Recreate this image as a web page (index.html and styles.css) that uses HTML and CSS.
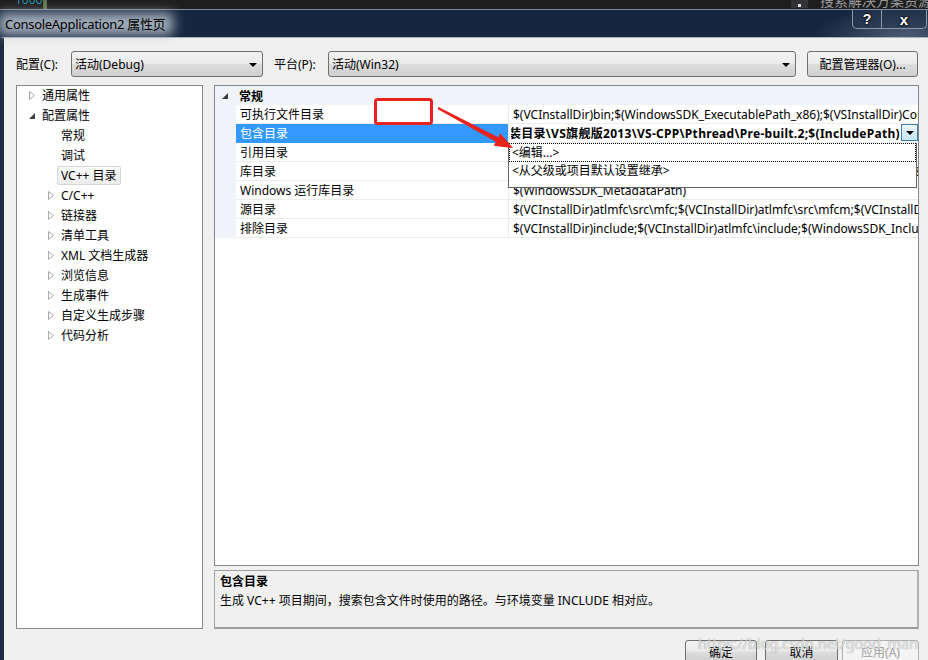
FILE: index.html
```html
<!DOCTYPE html>
<html>
<head>
<meta charset="utf-8">
<title>ConsoleApplication2 属性页</title>
<link rel="stylesheet" href="styles.css">
</head>
<body>
<div class="screen">
  <div class="topstrip">
    <span class="lnum">1006</span>
    <span class="gbar"></span>
    <span class="tbox"><span class="tdot"></span></span>
    <span class="srch">搜索解决方案资源管理器</span>
  </div>
  <div class="titlebar">
    <span class="title">ConsoleApplication2 属性页</span>
    <div class="capbtns">
      <span class="cap help">?</span>
      <span class="cap close">x</span>
    </div>
  </div>
  <div class="dialog">
    <div class="configrow">
      <span class="lbl lbl-cfg">配置(C):</span>
      <div class="combo combo-cfg"><span class="ctext">活动(Debug)</span><span class="carrow"></span></div>
      <span class="lbl lbl-plat">平台(P):</span>
      <div class="combo combo-plat"><span class="ctext">活动(Win32)</span><span class="carrow"></span></div>
      <span class="btn btn-mgr">配置管理器(O)...</span>
    </div>
    <div class="main">
      <div class="tree">
        <div class="titem l0"><svg class="exp" width="6" height="9" viewBox="0 0 6 9"><path d="M0.5 0.5 L5.5 4.5 L0.5 8.5 Z"/></svg><span>通用属性</span></div>
        <div class="titem l0"><svg class="col" width="6" height="9" viewBox="0 0 6 9"><path d="M6 2 L6 8 L0 8 Z"/></svg><span>配置属性</span></div>
        <div class="titem l1 leaf"><span>常规</span></div>
        <div class="titem l1 leaf"><span>调试</span></div>
        <div class="titem l1 leaf"><span class="tsel">VC++ 目录</span></div>
        <div class="titem l1"><svg class="exp" width="6" height="9" viewBox="0 0 6 9"><path d="M0.5 0.5 L5.5 4.5 L0.5 8.5 Z"/></svg><span>C/C++</span></div>
        <div class="titem l1"><svg class="exp" width="6" height="9" viewBox="0 0 6 9"><path d="M0.5 0.5 L5.5 4.5 L0.5 8.5 Z"/></svg><span>链接器</span></div>
        <div class="titem l1"><svg class="exp" width="6" height="9" viewBox="0 0 6 9"><path d="M0.5 0.5 L5.5 4.5 L0.5 8.5 Z"/></svg><span>清单工具</span></div>
        <div class="titem l1"><svg class="exp" width="6" height="9" viewBox="0 0 6 9"><path d="M0.5 0.5 L5.5 4.5 L0.5 8.5 Z"/></svg><span>XML 文档生成器</span></div>
        <div class="titem l1"><svg class="exp" width="6" height="9" viewBox="0 0 6 9"><path d="M0.5 0.5 L5.5 4.5 L0.5 8.5 Z"/></svg><span>浏览信息</span></div>
        <div class="titem l1"><svg class="exp" width="6" height="9" viewBox="0 0 6 9"><path d="M0.5 0.5 L5.5 4.5 L0.5 8.5 Z"/></svg><span>生成事件</span></div>
        <div class="titem l1"><svg class="exp" width="6" height="9" viewBox="0 0 6 9"><path d="M0.5 0.5 L5.5 4.5 L0.5 8.5 Z"/></svg><span>自定义生成步骤</span></div>
        <div class="titem l1"><svg class="exp" width="6" height="9" viewBox="0 0 6 9"><path d="M0.5 0.5 L5.5 4.5 L0.5 8.5 Z"/></svg><span>代码分析</span></div>
      </div>
      <div class="rightcol">
        <div class="grid">
          <div class="cat"><svg class="cattri" width="6" height="6" viewBox="0 0 6 6"><path d="M6 0 L6 6 L0 6 Z"/></svg><span class="catname">常规</span></div>
          <div class="prow"><div class="gut"></div><div class="pname">可执行文件目录</div><div class="pval">$(VCInstallDir)bin;$(WindowsSDK_ExecutablePath_x86);$(VSInstallDir)Common7\Tools\bin;$(VSInstallDir)Common7\tools;</div></div>
          <div class="prow sel"><div class="gut"></div><div class="pname">包含目录</div><div class="pval edit"><span class="eclip"><span class="etext">D:\安装目录\VS旗舰版2013\VS-CPP\Pthread\Pre-built.2;$(IncludePath)</span></span><span class="ddbtn"><span class="ddarrow"></span></span></div></div>
          <div class="prow"><div class="gut"></div><div class="pname">引用目录</div><div class="pval">$(VCInstallDir)atlmfc\lib;$(VCInstallDir)lib</div></div>
          <div class="prow"><div class="gut"></div><div class="pname">库目录</div><div class="pval">$(VCInstallDir)lib;$(VCInstallDir)atlmfc\lib;$(WindowsSDK_LibraryPath_x86);</div></div>
          <div class="prow"><div class="gut"></div><div class="pname">Windows 运行库目录</div><div class="pval">$(WindowsSDK_MetadataPath)</div></div>
          <div class="prow"><div class="gut"></div><div class="pname">源目录</div><div class="pval">$(VCInstallDir)atlmfc\src\mfc;$(VCInstallDir)atlmfc\src\mfcm;$(VCInstallDir)atlmfc\src\atl;$(VCInstallDir)crt\src;</div></div>
          <div class="prow"><div class="gut"></div><div class="pname">排除目录</div><div class="pval">$(VCInstallDir)include;$(VCInstallDir)atlmfc\include;$(WindowsSDK_IncludePath);$(MSBuildToolsPath32);</div></div>
          <div class="popup">
            <div class="pitem focus">&lt;编辑...&gt;</div>
            <div class="pitem">&lt;从父级或项目默认设置继承&gt;</div>
          </div>
        </div>
        <div class="desc">
          <div class="dtitle">包含目录</div>
          <div class="dtext">生成 VC++ 项目期间，搜索包含文件时使用的路径。与环境变量 INCLUDE 相对应。</div>
        </div>
      </div>
    </div>
    <div class="buttons">
      <span class="btn btn-ok">确定</span>
      <span class="btn btn-cancel">取消</span>
      <span class="btn btn-apply disabled">应用(A)</span>
    </div>
  </div>
  <svg class="annot" width="928" height="660" viewBox="0 0 928 660">
    <rect x="375.5" y="99.5" width="56" height="24" rx="2" ry="2" fill="#ffffff" stroke="#e8231c" stroke-width="3"/>
    <polygon points="437.5,108.9 438.5,107.1 498.2,137.3 500.3,133.3 513,148 493.7,145.7 495.8,141.7" fill="#e8231c"/>
  </svg>
  <div class="watermark">https://blog.csdn.net/good_man</div>
</div>
</body>
</html>
```

FILE: styles.css
```css
* { box-sizing: border-box; }
html, body { margin: 0; padding: 0; }
body {
  width: 928px;
  height: 660px;
  overflow: hidden;
  background: #1e1e1e;
  font-family: "Noto Sans", "Noto Sans CJK SC", sans-serif;
  font-size: 12px;
  color: #000;
}
.screen {
  position: relative;
  width: 928px;
  height: 660px;
  overflow: hidden;
}

/* top strip of the IDE behind */
.topstrip {
  height: 9px;
  display: flex;
  align-items: flex-start;
  background: #1e1e1e;
  overflow: hidden;
  white-space: nowrap;
}
.lnum {
  width: 28px;
  margin-left: 15px;
  margin-top: -7px;
  color: #2b91af;
  font-size: 12px;
  line-height: 14px;
}
.gbar {
  width: 4px;
  height: 9px;
  background: #60744a;
}
.tbox {
  margin-left: auto;
  width: 17px;
  height: 8px;
  background: #333337;
  display: flex;
  justify-content: center;
  align-items: flex-end;
  margin-right: 12px;
}
.tdot { width: 3px; height: 3px; background: #ddd; margin-bottom: 1px; }
.srch {
  color: #9a9a9a;
  font-size: 14px;
  line-height: 14px;
  margin-top: -6px;
  width: 108px;
  overflow: hidden;
}

/* title bar */
.titlebar {
  height: 28px;
  display: flex;
  align-items: center;
  background: #172640;
  background-image: radial-gradient(ellipse 90px 30px at 905px 26px, rgba(140,155,175,0.45), rgba(23,38,64,0) 100%);
  border-top: 1px solid #7d8ca2;
}
.title {
  position: relative;
  z-index: 0;
  margin-left: 5px;
  font-size: 13px;
  letter-spacing: -0.3px;
  line-height: 18px;
  color: #000;
}
.title::before {
  content: "";
  position: absolute;
  left: -6px;
  right: -8px;
  top: -2px;
  bottom: -2px;
  background: rgba(178, 188, 200, 0.9);
  filter: blur(6px);
  z-index: -1;
}
.capbtns {
  margin-left: auto;
  margin-right: 1px;
  align-self: flex-start;
  width: 75px;
  height: 19px;
  display: flex;
  border: 1px solid #8c98a8;
  border-top: none;
  border-radius: 0 0 5px 5px;
  background: rgba(40, 55, 80, 0.6);
}
.cap {
  display: flex;
  justify-content: center;
  align-items: center;
  color: #fff;
  font-weight: bold;
  font-family: "Liberation Sans", sans-serif;
  font-size: 14px;
  text-shadow: 0 0 2px #000, 0 0 3px #000;
}
.help { width: 29px; border-right: 1px solid #8c98a8; }
.close { flex: 1; font-size: 15px; }

/* dialog body */
.dialog {
  height: 623px;
  background: #f0f0f0;
  border-left: 4px solid #1c2a43;
  border-top: 1px solid #a9b2be;
  padding: 13px 0 0 12px;
  display: flex;
  flex-direction: column;
}
.configrow {
  display: flex;
  align-items: center;
  height: 26px;
}
.lbl { white-space: nowrap; }
.lbl-cfg { width: 55px; }
.lbl-plat { width: 54px; margin-left: 11px; }
.combo {
  height: 26px;
  border: 1px solid #707070;
  border-radius: 3px;
  background: linear-gradient(#f2f2f2 0%, #ebebeb 48%, #dddddd 52%, #cfcfcf 100%);
  display: flex;
  align-items: center;
  padding-left: 3px;
}
.combo-cfg { width: 192px; }
.combo-plat { width: 468px; }
.carrow {
  margin-left: auto;
  margin-right: 5px;
  margin-top: 2px;
  width: 0;
  height: 0;
  border-left: 4px solid transparent;
  border-right: 4px solid transparent;
  border-top: 4px solid #000;
}
.btn {
  display: flex;
  justify-content: center;
  align-items: center;
  border: 1px solid #707070;
  border-radius: 3px;
  background: linear-gradient(#f2f2f2 0%, #ebebeb 48%, #dddddd 52%, #cfcfcf 100%);
  white-space: nowrap;
}
.btn-mgr { width: 111px; height: 26px; margin-left: 11px; }

.main {
  display: flex;
  margin-top: 8px;
  height: 544px;
}
.tree {
  width: 187px;
  height: 544px;
  border: 1px solid #828790;
  background: #fff;
}
.titem {
  height: 20px;
  display: flex;
  align-items: center;
  white-space: nowrap;
}
.titem:first-child { margin-top: -1px; }
.titem.l0 { padding-left: 12px; }
.titem.l1 { padding-left: 31px; }
.titem svg { flex-shrink: 0; margin-right: 7px; }
.titem .exp path { fill: #fff; stroke: #a6a6a6; stroke-width: 1; }
.titem .col path { fill: #404040; }
.titem.leaf { padding-left: 44px; }
.tsel {
  margin-left: -4px;
  padding: 0 3px;
  height: 19px;
  display: flex;
  align-items: center;
  border: 1px solid #d6d6d6;
  border-radius: 2px;
  background: linear-gradient(#fbfbfb, #ececec);
}

.rightcol {
  margin-left: 11px;
  width: 705px;
  display: flex;
  flex-direction: column;
  gap: 4px;
}
.grid {
  position: relative;
  height: 482px;
  border: 1px solid #828790;
  background: #fff;
  overflow: hidden;
}
.cat {
  height: 19px;
  display: flex;
  align-items: center;
  background: #f0f3f8;
}
.cattri { margin-left: 7px; }
.cattri path { fill: #3c3c3c; }
.catname { margin-left: 11px; font-weight: bold; }
.prow {
  height: 19px;
  display: flex;
  white-space: nowrap;
}
.gut {
  width: 21px;
  flex-shrink: 0;
  background: #f0f3f8;
}
.pname {
  width: 273px;
  flex-shrink: 0;
  padding-left: 4px;
  border-bottom: 1px solid #ececec;
  border-right: 1px solid #ececec;
  line-height: 19px;
  overflow: hidden;
}
.pval {
  flex: 1;
  min-width: 0;
  padding-left: 4px;
  border-bottom: 1px solid #ececec;
  line-height: 19px;
  overflow: hidden;
}
.prow.sel .pname {
  background: #3399ff;
  color: #fff;
  border-bottom-color: #3399ff;
}
.pval.edit {
  display: flex;
  padding-left: 2px;
  padding-right: 0;
}
.eclip {
  flex: 1;
  min-width: 0;
  overflow: hidden;
  display: flex;
  justify-content: flex-end;
}
.etext {
  flex-shrink: 0;
  font-weight: bold;
  letter-spacing: 0.3px;
  padding-right: 1px;
}
.ddbtn {
  width: 17px;
  height: 17px;
  flex-shrink: 0;
  border: 1px solid #3c7fb1;
  background: linear-gradient(#eaf6fd, #c4e5f6);
  display: flex;
  justify-content: center;
  align-items: center;
}
.ddarrow {
  width: 0;
  height: 0;
  border-left: 4px solid transparent;
  border-right: 4px solid transparent;
  border-top: 4px solid #000;
}
.popup {
  position: absolute;
  left: 293px;
  top: 57px;
  width: 409px;
  height: 45px;
  background: #fff;
  border: 1px solid #646464;
  border-top: none;
}
.pitem {
  height: 18px;
  line-height: 18px;
  padding-left: 3px;
  white-space: nowrap;
}
.pitem.focus {
  height: 19px;
  border: 1px dotted #000;
  padding-left: 2px;
  line-height: 18px;
}

.desc {
  height: 59px;
  border: 1px solid #a0a0a0;
  border-bottom: 2px solid #9c9c9c;
  border-right: 2px solid #b0b0b0;
  background: #f0f0f0;
  padding: 1px 5px;
}
.dtitle { font-weight: bold; line-height: 19px; }
.dtext { line-height: 19px; white-space: nowrap; }

.buttons {
  display: flex;
  justify-content: flex-end;
  margin-top: 11px;
  margin-right: 9px;
}
.btn-ok { width: 72px; height: 23px; }
.btn-cancel { width: 73px; height: 23px; margin-left: 8px; }
.btn-apply { width: 77px; height: 23px; margin-left: 4px; }
.btn.disabled {
  color: #a0a0a0;
  border-color: #adb2b5;
  background: #f4f4f4;
}

.annot {
  position: absolute;
  left: 0;
  top: 0;
  pointer-events: none;
}
.watermark {
  position: absolute;
  left: 698px;
  top: 633px;
  font-family: "Noto Sans", sans-serif;
  font-size: 14.5px;
  line-height: 20px;
  color: rgba(255, 255, 255, 0.7);
  text-shadow: 0 0 1px rgba(90, 90, 90, 0.7);
  white-space: nowrap;
}
```
